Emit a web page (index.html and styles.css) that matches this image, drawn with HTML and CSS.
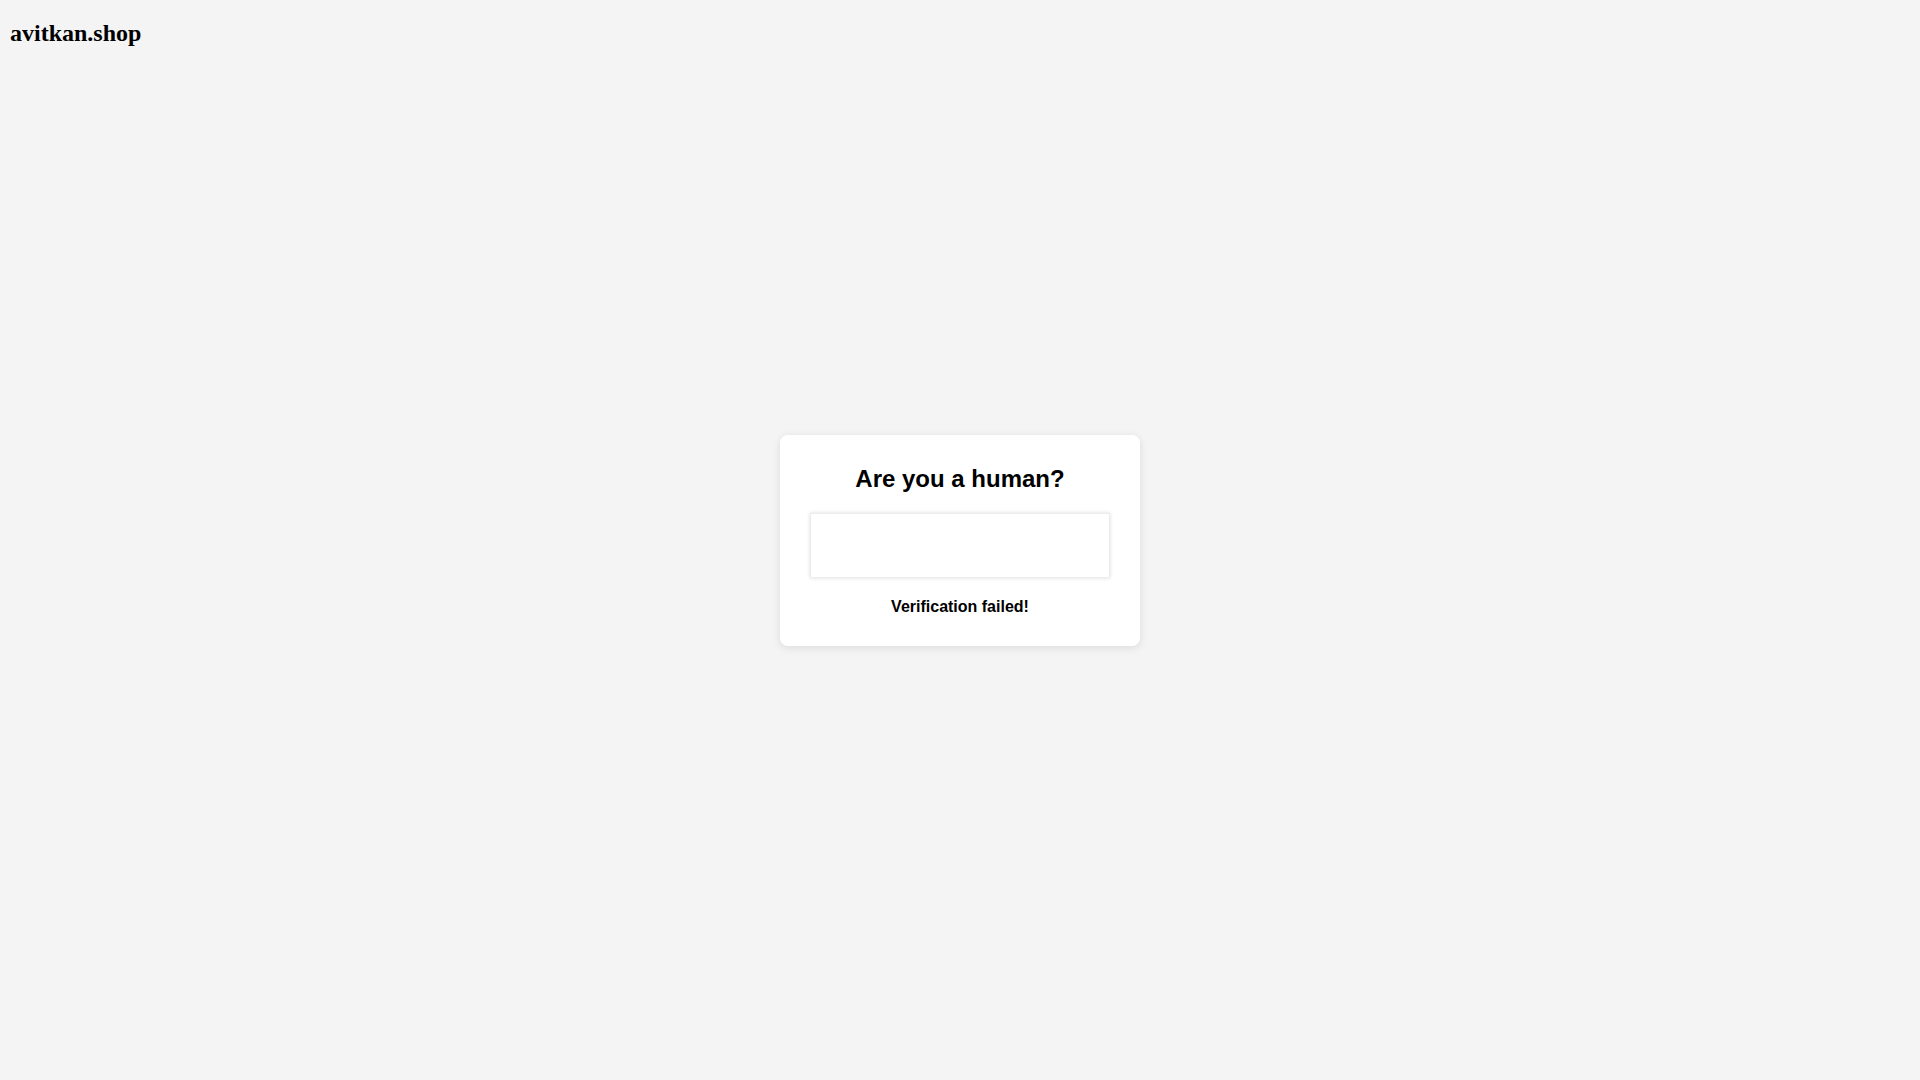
FILE: index.html
```html
<!DOCTYPE html>
<html lang="en">
<head>
<meta charset="utf-8">
<title>avitkan.shop</title>
<link rel="stylesheet" href="styles.css">
</head>
<body>
<div class="page">
  <header class="site-header">avitkan.shop</header>
  <main class="main">
    <div class="card">
      <h2 class="card-title">Are you a human?</h2>
      <div class="challenge"></div>
      <p class="status">Verification failed!</p>
    </div>
  </main>
</div>
</body>
</html>
```
FILE: styles.css
```css
html, body {
  margin: 0;
  padding: 0;
}
body {
  background: #f4f4f4;
  color: #000;
  font-family: "Liberation Sans", Arial, sans-serif;
}
.page {
  display: grid;
  grid-template: 1fr / 1fr;
  min-height: 100vh;
}
.site-header {
  grid-area: 1 / 1;
  align-self: start;
  justify-self: start;
  padding: 20px 10px;
  font-family: "Liberation Serif", "Times New Roman", serif;
  font-weight: bold;
  font-size: 24px;
  line-height: 27px;
}
.main {
  grid-area: 1 / 1;
  display: flex;
  align-items: center;
  justify-content: center;
}
.card {
  width: 300px;
  padding: 30px;
  background: #fff;
  border-radius: 8px;
  box-shadow: 0 2px 8px rgba(0, 0, 0, 0.1);
  text-align: center;
}
.card-title {
  margin: 0 0 20px;
  font-size: 24px;
  font-weight: bold;
  line-height: 28px;
}
.challenge {
  box-sizing: border-box;
  width: 300px;
  height: 65px;
  background: #fff;
  border: 1px solid #ececec;
  box-shadow: 0 0 4px rgba(0, 0, 0, 0.14);
}
.status {
  margin: 20px 0 0;
  font-size: 16px;
  font-weight: bold;
  line-height: 18px;
}
```
